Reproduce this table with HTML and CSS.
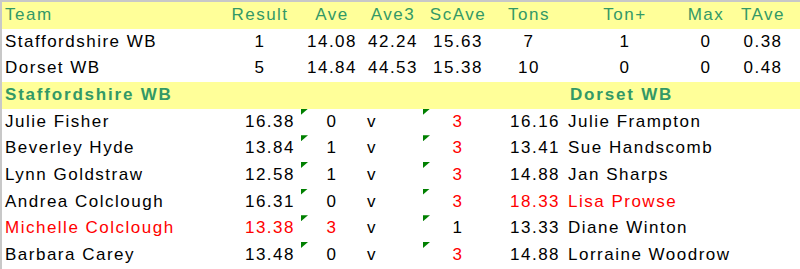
FILE: index.html
```html
<!DOCTYPE html>
<html>
<head>
<meta charset="utf-8">
<link rel="stylesheet" href="styles.css">
</head>
<body>
<div class="sheet">
  <div class="row head">
    <div class="c left">Team</div>
    <div class="c">Result</div>
    <div class="c">Ave</div>
    <div class="c">Ave3</div>
    <div class="c">ScAve</div>
    <div class="c">Tons</div>
    <div class="c">Ton+</div>
    <div class="c">Max</div>
    <div class="c">TAve</div>
  </div>
  <div class="row">
    <div class="c left">Staffordshire WB</div>
    <div class="c">1</div>
    <div class="c">14.08</div>
    <div class="c">42.24</div>
    <div class="c">15.63</div>
    <div class="c">7</div>
    <div class="c">1</div>
    <div class="c">0</div>
    <div class="c">0.38</div>
  </div>
  <div class="row">
    <div class="c left">Dorset WB</div>
    <div class="c">5</div>
    <div class="c">14.84</div>
    <div class="c">44.53</div>
    <div class="c">15.38</div>
    <div class="c">10</div>
    <div class="c">0</div>
    <div class="c">0</div>
    <div class="c">0.48</div>
  </div>
  <div class="row sub">
    <div class="c left bold span6">Staffordshire WB</div>
    <div class="c right-team bold">Dorset WB</div>
  </div>

  <div class="row">
    <div class="c left">Julie Fisher</div>
    <div class="c avg">16.38</div>
    <div class="c tick">0</div>
    <div class="c v">v</div>
    <div class="c tick red">3</div>
    <div class="c avg2">16.16</div>
    <div class="c name2">Julie Frampton</div>
  </div>
  <div class="row">
    <div class="c left">Beverley Hyde</div>
    <div class="c avg">13.84</div>
    <div class="c tick">1</div>
    <div class="c v">v</div>
    <div class="c tick red">3</div>
    <div class="c avg2">13.41</div>
    <div class="c name2">Sue Handscomb</div>
  </div>
  <div class="row">
    <div class="c left">Lynn Goldstraw</div>
    <div class="c avg">12.58</div>
    <div class="c tick">1</div>
    <div class="c v">v</div>
    <div class="c tick red">3</div>
    <div class="c avg2">14.88</div>
    <div class="c name2">Jan Sharps</div>
  </div>
  <div class="row">
    <div class="c left">Andrea Colclough</div>
    <div class="c avg">16.31</div>
    <div class="c tick">0</div>
    <div class="c v">v</div>
    <div class="c tick red">3</div>
    <div class="c avg2 red">18.33</div>
    <div class="c name2 red">Lisa Prowse</div>
  </div>
  <div class="row">
    <div class="c left red">Michelle Colclough</div>
    <div class="c avg red">13.38</div>
    <div class="c tick red">3</div>
    <div class="c v">v</div>
    <div class="c tick">1</div>
    <div class="c avg2">13.33</div>
    <div class="c name2">Diane Winton</div>
  </div>
  <div class="row">
    <div class="c left">Barbara Carey</div>
    <div class="c avg">13.48</div>
    <div class="c tick">0</div>
    <div class="c v">v</div>
    <div class="c tick red">3</div>
    <div class="c avg2">14.88</div>
    <div class="c name2">Lorraine Woodrow</div>
  </div>
</div>
</body>
</html>
```
FILE: styles.css
```css
html, body {
  margin: 0;
  padding: 0;
  background: #ffffff;
}
.sheet {
  width: 798px;
  border-top: 2px solid #c8c8c8;
  border-left: 2px solid #c8c8c8;
  font-family: "Liberation Sans", Arial, sans-serif;
  font-size: 17px;
  letter-spacing: 1.5px;
  color: #000000;
}
.row {
  display: grid;
  grid-template-columns: 218px 80px 64px 58px 72px 70px 122px 40px 74px;
  height: 26.667px;
  line-height: 26.667px;
}
.c {
  text-align: center;
  white-space: nowrap;
  position: relative;
}
.left {
  text-align: left;
  padding-left: 3px;
}
.head, .sub {
  background: #ffff99;
  color: #339966;
}
.bold {
  font-weight: bold;
  letter-spacing: 1.8px;
}
.span6 {
  grid-column: 1 / span 6;
}
.right-team {
  grid-column: 7 / span 3;
  text-align: left;
  padding-left: 6px;
}
.avg {
  text-align: right;
  padding-right: 5px;
}
.v {
  text-align: left;
  padding-left: 3px;
}
.avg2 {
  text-align: left;
  padding-left: 16px;
}
.name2 {
  grid-column: 7 / span 3;
  text-align: left;
  padding-left: 4px;
}
.tick::before {
  content: "";
  position: absolute;
  left: 1px;
  top: 0;
  width: 7px;
  height: 6px;
  background: #008000;
  clip-path: polygon(0 0, 100% 0, 0 100%);
}
.red {
  color: #ff0000;
}
```
